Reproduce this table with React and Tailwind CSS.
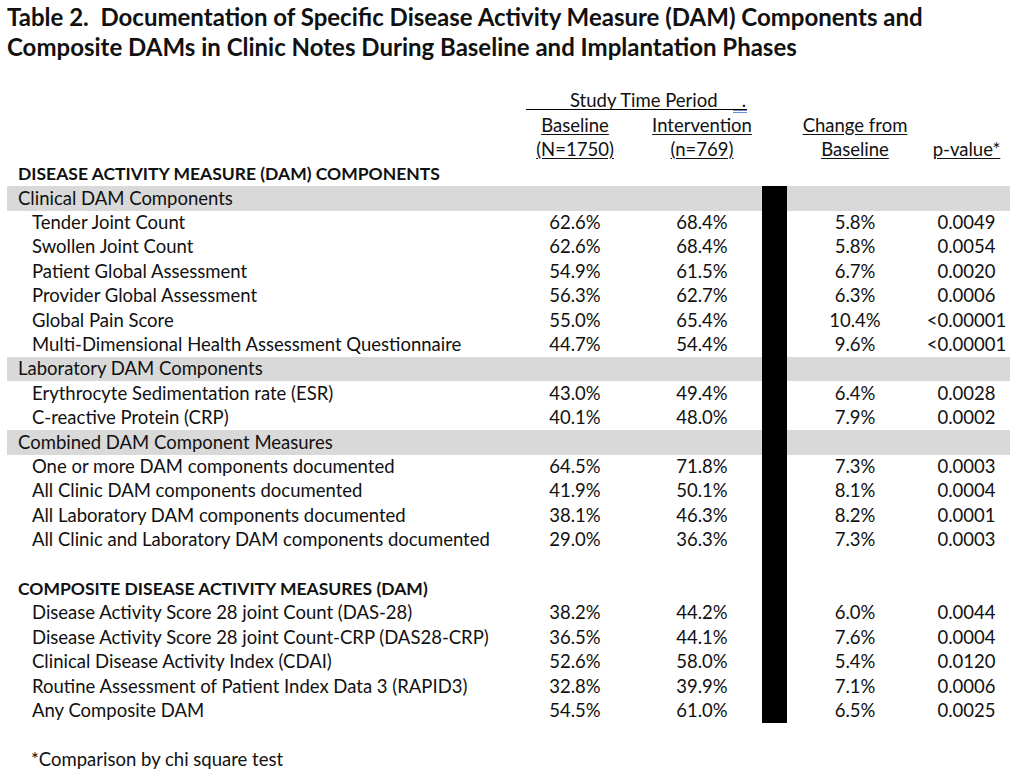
import React from "react";

// table data
const sections = [
  {
    band: "Clinical DAM Components",
    rows: [
      ["Tender Joint Count", "62.6%", "68.4%", "5.8%", "0.0049"],
      ["Swollen Joint Count", "62.6%", "68.4%", "5.8%", "0.0054"],
      ["Patient Global Assessment", "54.9%", "61.5%", "6.7%", "0.0020"],
      ["Provider Global Assessment", "56.3%", "62.7%", "6.3%", "0.0006"],
      ["Global Pain Score", "55.0%", "65.4%", "10.4%", "<0.00001"],
      ["Multi-Dimensional Health Assessment Questionnaire", "44.7%", "54.4%", "9.6%", "<0.00001"],
    ],
  },
  {
    band: "Laboratory DAM Components",
    rows: [
      ["Erythrocyte Sedimentation rate (ESR)", "43.0%", "49.4%", "6.4%", "0.0028"],
      ["C-reactive Protein (CRP)", "40.1%", "48.0%", "7.9%", "0.0002"],
    ],
  },
  {
    band: "Combined DAM Component Measures",
    rows: [
      ["One or more DAM components documented", "64.5%", "71.8%", "7.3%", "0.0003"],
      ["All Clinic DAM components documented", "41.9%", "50.1%", "8.1%", "0.0004"],
      ["All Laboratory DAM components documented", "38.1%", "46.3%", "8.2%", "0.0001"],
      ["All Clinic and Laboratory DAM components documented", "29.0%", "36.3%", "7.3%", "0.0003"],
    ],
  },
];

const composite = [
  ["Disease Activity Score 28 joint Count (DAS-28)", "38.2%", "44.2%", "6.0%", "0.0044"],
  ["Disease Activity Score 28 joint Count-CRP (DAS28-CRP)", "36.5%", "44.1%", "7.6%", "0.0004"],
  ["Clinical Disease Activity Index (CDAI)", "52.6%", "58.0%", "5.4%", "0.0120"],
  ["Routine Assessment of Patient Index Data 3 (RAPID3)", "32.8%", "39.9%", "7.1%", "0.0006"],
  ["Any Composite DAM", "54.5%", "61.0%", "6.5%", "0.0025"],
];

const Row = ({ children, className = "" }) => (
  <div className={`flex h-[24.4px] items-center ${className}`}>{children}</div>
);

// label | baseline | intervention | bar | change | p-value
const Cells = ({ label, values = [], labelClass = "pl-[25px]", bar = true, gray = false }) => (
  <Row className={gray ? "bg-[#d9d9d9]" : ""}>
    <div className={`w-[506px] whitespace-nowrap ${labelClass}`}>{label}</div>
    <div className="w-[124px] text-center">{values[0]}</div>
    <div className="w-[125px] pl-[5px] text-center">{values[1]}</div>
    <div className={`w-[25px] self-stretch ${bar ? "bg-black" : ""}`} />
    <div className="w-[136px] text-center">{values[2]}</div>
    <div className="w-[87px] text-center">{values[3]}</div>
  </Row>
);

export default function App() {
  return (
    <div className="min-h-screen w-[1031px] bg-white text-[#111] font-['Lato',sans-serif] text-[18.5px]">
      {/* title */}
      <div className="pl-[7px] pt-[2px] text-[24px] font-bold leading-[30px]">
        <div>Table 2.&nbsp; Documentation of Specific Disease Activity Measure (DAM) Components and</div>
        <div>Composite DAMs in Clinic Notes During Baseline and Implantation Phases</div>
      </div>

      <div className="ml-[7px] mt-[26.8px] w-[1003px]">
        {/* header */}
        <Row>
          <div className="w-[506px]" />
          <div className="w-[249px]">
            <div className="relative ml-[13px] flex h-[19px] w-[221px] border-b border-black pl-[44px] leading-[19px]">
              <span>Study Time Period</span>
              <span className="ml-auto pr-[1px]">.</span>
              <span className="absolute right-0 bottom-[-4px] h-[3px] w-[14px] border-y border-[#6b8fd6]" />
            </div>
          </div>
        </Row>
        <Row>
          <div className="w-[506px]" />
          <div className="w-[124px] text-center"><span className="underline underline-offset-2">Baseline</span></div>
          <div className="w-[125px] pl-[5px] text-center"><span className="underline underline-offset-2">Intervention</span></div>
          <div className="w-[25px]" />
          <div className="w-[136px] text-center"><span className="underline underline-offset-2">Change from</span></div>
          <div className="w-[87px]" />
        </Row>
        <Row>
          <div className="w-[506px]" />
          <div className="w-[124px] text-center"><span className="underline underline-offset-2">(N=1750)</span></div>
          <div className="w-[125px] pl-[5px] text-center"><span className="underline underline-offset-2">(n=769)</span></div>
          <div className="w-[25px]" />
          <div className="w-[136px] text-center"><span className="underline underline-offset-2">Baseline</span></div>
          <div className="w-[87px] text-center"><span className="underline underline-offset-2">p-value*</span></div>
        </Row>
        <Cells label="DISEASE ACTIVITY MEASURE (DAM) COMPONENTS" labelClass="pl-[11px] font-bold text-[17.5px]" bar={false} />

        {sections.map((s) => (
          <React.Fragment key={s.band}>
            <Cells label={s.band} labelClass="pl-[11px]" gray />
            {s.rows.map((r) => (
              <Cells key={r[0]} label={r[0]} values={r.slice(1)} />
            ))}
          </React.Fragment>
        ))}

        <Cells label="" />
        <Cells label="COMPOSITE DISEASE ACTIVITY MEASURES (DAM)" labelClass="pl-[11px] font-bold text-[17.5px]" />
        {composite.map((r) => (
          <Cells key={r[0]} label={r[0]} values={r.slice(1)} />
        ))}

        <Row />
        <Row>
          <div className="pl-[24px]">*Comparison by chi square test</div>
        </Row>
      </div>
    </div>
  );
}
